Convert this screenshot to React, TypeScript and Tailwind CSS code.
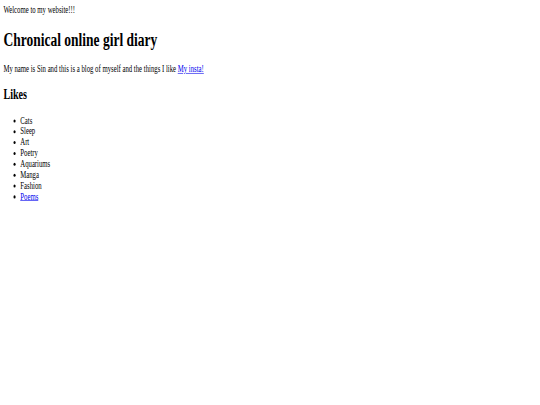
import React from 'react';

const likes = ['Cats', 'Sleep', 'Art', 'Poetry', 'Aquariums', 'Manga', 'Fashion'];

// The reference is a wide default-styled page squeezed into 540x405,
// so lay it out at full size and scale the whole thing down.
const App = () => {
  return (
    <div className="w-[540px] h-[405px] overflow-hidden bg-white">
      <div className="w-[1280px] h-[672px] origin-top-left scale-x-[0.4219] scale-y-[0.603] text-black font-['Liberation_Serif','Times_New_Roman',serif] text-[16px] leading-[normal]">
        <div className="p-2">
          <div>Welcome to my website!!!</div>

          <h1 className="text-[32px] font-bold my-[21.44px] leading-[normal]">
            Chronical online girl diary
          </h1>

          <p className="my-4">
            My name is Sin and this is a blog of myself and the things I like{' '}
            <a href="#" className="text-[#0000ee] underline">My insta!</a>
          </p>

          <h2 className="text-[24px] font-bold my-[19.92px] leading-[normal]">Likes</h2>

          <ul className="list-disc pl-10 my-4">
            {likes.map((item) => (
              <li key={item}>{item}</li>
            ))}
            <li>
              <a href="#" className="text-[#0000ee] underline">Poems</a>
            </li>
          </ul>
        </div>
      </div>
    </div>
  );
};

export default App;
